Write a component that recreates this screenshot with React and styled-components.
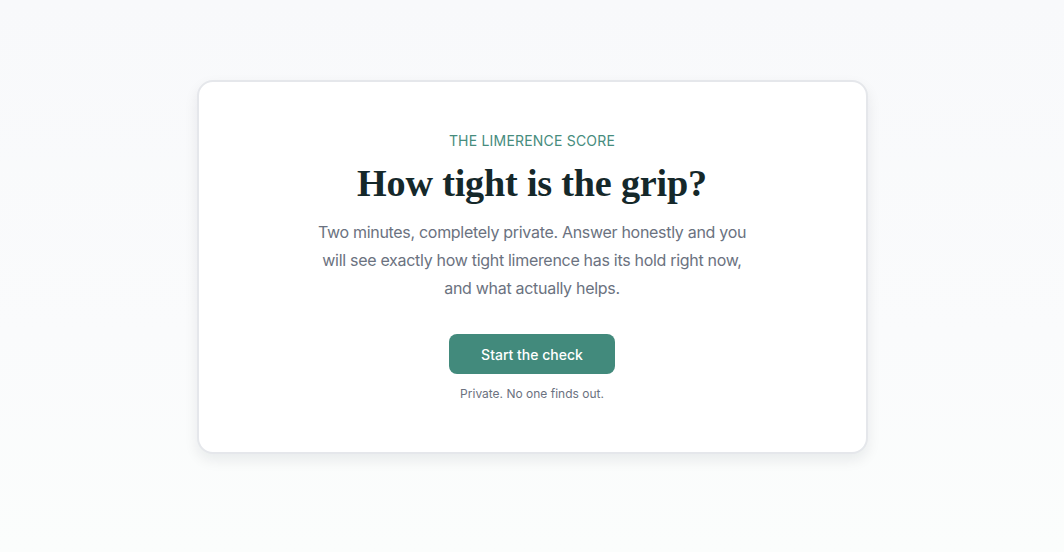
import React from 'react';
import styled, { createGlobalStyle } from 'styled-components';

const Global = createGlobalStyle`
  html, body {
    margin: 0;
    padding: 0;
  }
  body {
    font-family: Inter, "Noto Sans", sans-serif;
    background: linear-gradient(180deg, #f8f9fb 0%, #fafbfc 60%, #fbfdfc 100%);
    min-height: 100vh;
  }
`;

const Page = styled.main`
  min-height: 552px;
  box-sizing: border-box;
  padding: 80px 24px;
  display: flex;
  justify-content: center;
  align-items: flex-start;
`;

const Card = styled.section`
  width: 671px;
  box-sizing: border-box;
  background: #fff;
  border: 2px solid #e5e7eb;
  border-radius: 16px;
  box-shadow: 0 6px 14px rgba(17, 24, 39, 0.08);
  padding: 49px 48px 50px;
  display: flex;
  flex-direction: column;
  align-items: center;
  text-align: center;
`;

const Eyebrow = styled.div`
  font-size: 14px;
  line-height: 20px;
  letter-spacing: 0.2px;
  text-transform: uppercase;
  color: #468c7d;
  font-weight: 400;
`;

const Title = styled.h1`
  margin: 9px 0 0;
  font-family: "Liberation Serif", "DejaVu Serif", serif;
  font-weight: 700;
  font-size: 38.2px;
  line-height: 46px;
  color: #15282a;
  letter-spacing: -0.2px;
`;

const Lead = styled.p`
  margin: 12px 0 0;
  max-width: 432px;
  font-size: 16px;
  line-height: 28px;
  letter-spacing: -0.3px;
  color: #6b7280;
`;

const Button = styled.button`
  margin-top: 32px;
  width: 166px;
  height: 40px;
  border: none;
  border-radius: 8px;
  background: #428a7c;
  color: #fff;
  font-family: Inter, sans-serif;
  font-size: 14px;
  font-weight: 500;
  cursor: pointer;
`;

const Note = styled.div`
  margin-top: 12px;
  font-size: 12px;
  line-height: 16px;
  color: #6b7280;
`;

export default function App() {
  return (
    <>
      <Global />
      <Page>
        <Card>
          <Eyebrow>The Limerence Score</Eyebrow>
          <Title>How tight is the grip?</Title>
          <Lead>
            Two minutes, completely private. Answer honestly and you will see exactly how tight limerence has its hold right now, and what actually helps.
          </Lead>
          <Button>Start the check</Button>
          <Note>Private. No one finds out.</Note>
        </Card>
      </Page>
    </>
  );
}
